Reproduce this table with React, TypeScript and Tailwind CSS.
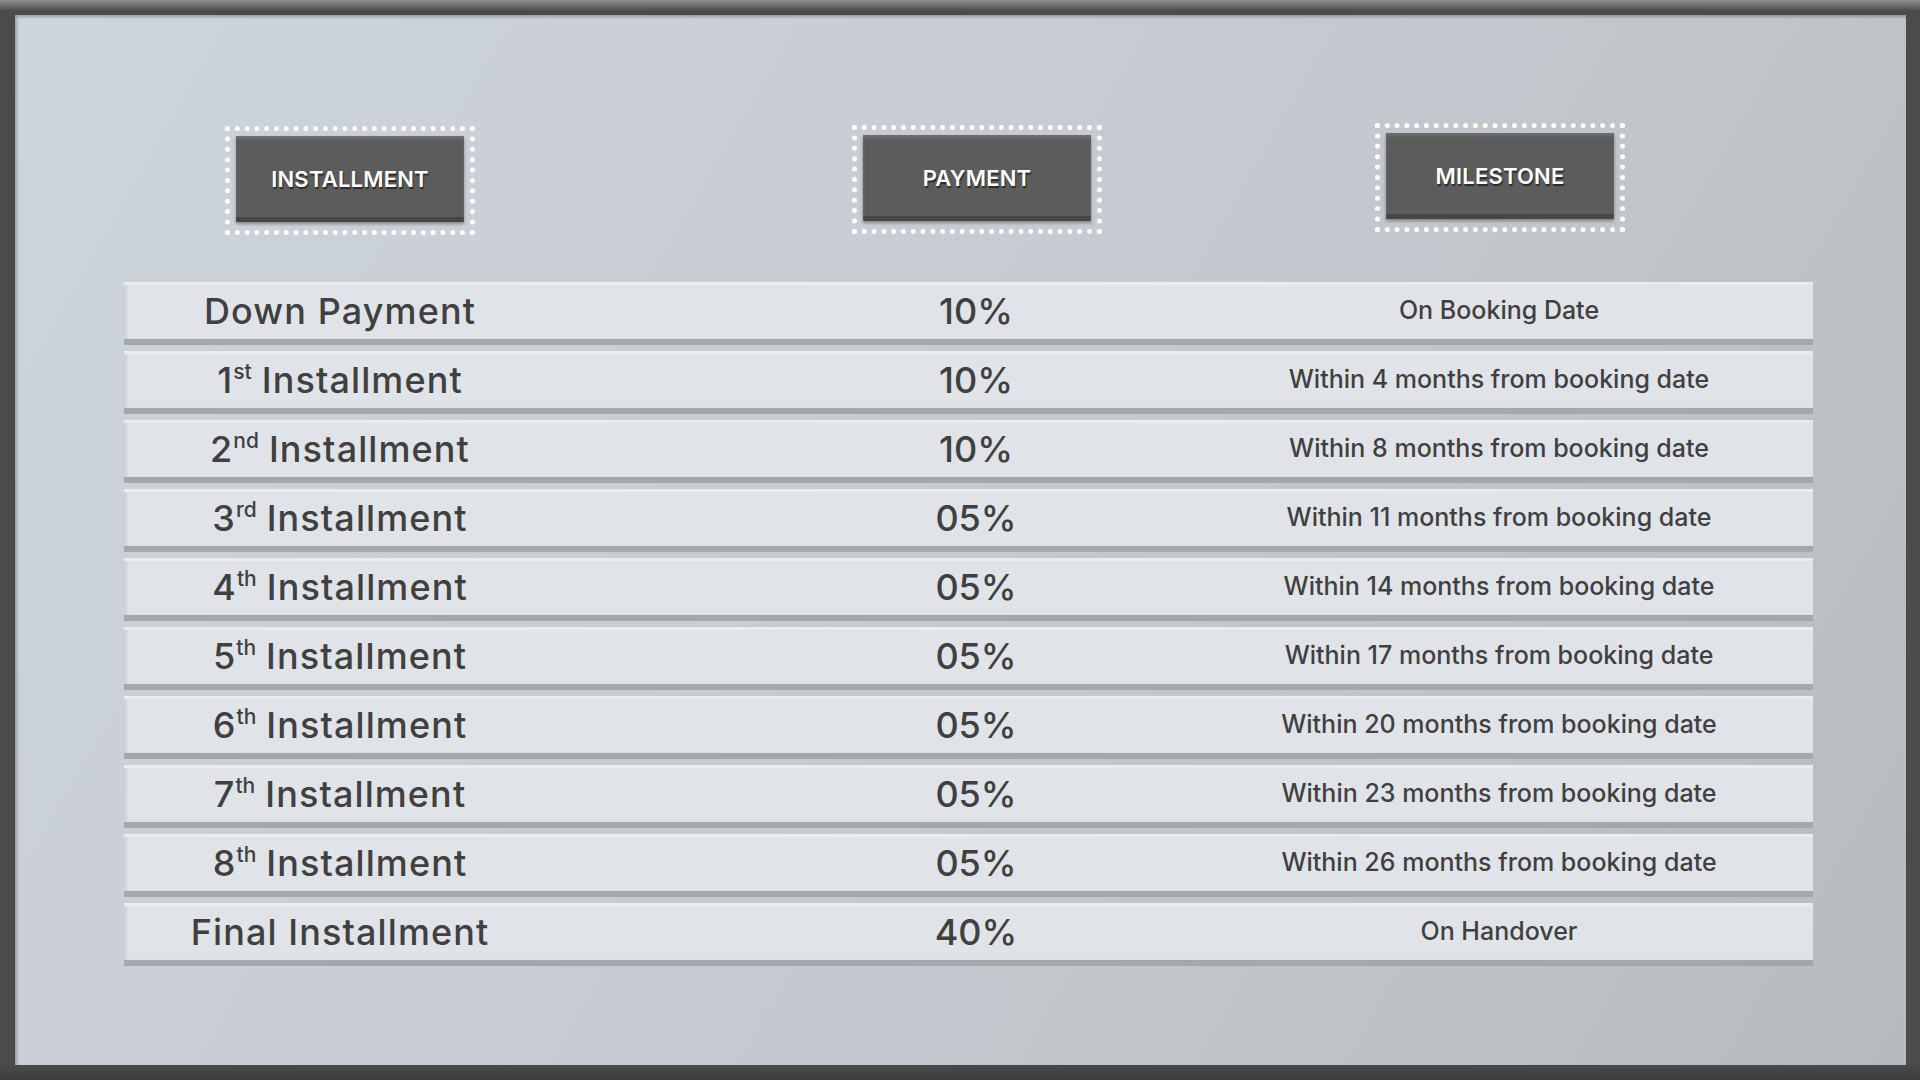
import type { ReactNode } from 'react'

type Row = {
  num?: string
  sup?: string
  label: string
  pct: string
  milestone: string
}

const rows: Row[] = [
  { label: 'Down Payment', pct: '10%', milestone: 'On Booking Date' },
  { num: '1', sup: 'st', label: 'Installment', pct: '10%', milestone: 'Within 4 months from booking date' },
  { num: '2', sup: 'nd', label: 'Installment', pct: '10%', milestone: 'Within 8 months from booking date' },
  { num: '3', sup: 'rd', label: 'Installment', pct: '05%', milestone: 'Within 11 months from booking date' },
  { num: '4', sup: 'th', label: 'Installment', pct: '05%', milestone: 'Within 14 months from booking date' },
  { num: '5', sup: 'th', label: 'Installment', pct: '05%', milestone: 'Within 17 months from booking date' },
  { num: '6', sup: 'th', label: 'Installment', pct: '05%', milestone: 'Within 20 months from booking date' },
  { num: '7', sup: 'th', label: 'Installment', pct: '05%', milestone: 'Within 23 months from booking date' },
  { num: '8', sup: 'th', label: 'Installment', pct: '05%', milestone: 'Within 26 months from booking date' },
  { label: 'Final Installment', pct: '40%', milestone: 'On Handover' },
]

function HeaderButton({ children, className }: { children: ReactNode; className?: string }) {
  return (
    <div className={`w-[250px] h-[109px] border-[5px] border-dotted border-white pt-[5px] pb-[8px] px-[6px] ${className ?? ''}`}>
      <div className="h-full w-full bg-[#5c5c5c] flex items-center justify-center shadow-[inset_0_3px_3px_rgba(255,255,255,0.12),inset_0_-5px_0_#474747,0_2px_3px_rgba(0,0,0,0.35)]">
        <span className="text-white font-semibold text-[22px] tracking-[0.2px] [text-shadow:1px_2px_1px_rgba(0,0,0,0.55)]">
          {children}
        </span>
      </div>
    </div>
  )
}

export default function App() {
  return (
    <div
      className="w-[1920px] h-[1080px] pt-[15px] pl-[15px] pr-[14px] pb-[15px] bg-[linear-gradient(to_bottom,#8e8e8e_0px,#4b4b4b_11px,#4b4b4b_1064px,#3c3c3c_1080px)] font-['Inter','Noto_Sans',sans-serif]"
    >
      <div className="w-full h-full flex flex-col bg-[linear-gradient(120deg,#cdd4da_0%,#c7cdd3_40%,#c0c5ca_70%,#b7bbbf_100%)] shadow-[inset_2px_2px_3px_rgba(0,0,0,0.25)]">
        {/* header buttons */}
        <div className="flex items-start pl-[210px] pt-[108px] h-[267px]">
          <HeaderButton className="mt-[3px]">INSTALLMENT</HeaderButton>
          <HeaderButton className="mt-[2px] ml-[377px]">PAYMENT</HeaderButton>
          <HeaderButton className="ml-[273px]">MILESTONE</HeaderButton>
        </div>

        {/* rows */}
        <div className="flex flex-col ml-[109px] w-[1689px]">
          {rows.map((r, i) => (
            <div
              key={i}
              className="h-[63px] mb-[6px] flex items-center bg-[#e0e4e8] border-b-[6px] border-[#a4a8ac] text-[#404040] shadow-[inset_0_3px_0_#eaedf0,inset_3px_0_2px_rgba(0,0,0,0.08)]"
            >
              <div className="w-[432px] flex justify-center items-baseline text-[36px] font-medium tracking-[1.1px] leading-none whitespace-nowrap">
                {r.num && (
                  <>
                    <span>{r.num}</span>
                    <span className="text-[21px] tracking-normal relative -top-[14px] mr-[10px]">{r.sup}</span>
                  </>
                )}
                <span>{r.label}</span>
              </div>
              <div className="ml-[220px] w-[400px] text-center text-[36px] font-medium leading-none">{r.pct}</div>
              <div className="ml-[73px] w-[500px] text-center text-[25px] font-medium leading-none whitespace-nowrap">
                {r.milestone}
              </div>
            </div>
          ))}
        </div>
      </div>
    </div>
  )
}
